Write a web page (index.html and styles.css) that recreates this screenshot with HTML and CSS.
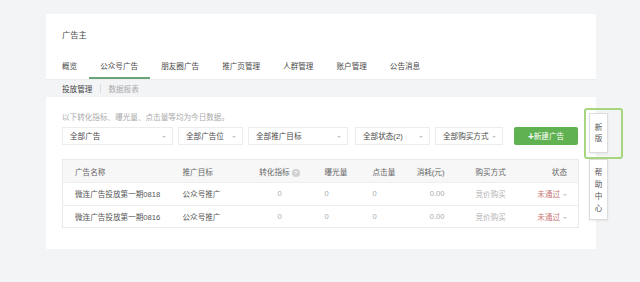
FILE: index.html
```html
<!DOCTYPE html>
<html lang="zh-CN">
<head>
    <meta charset="UTF-8">
    <meta name="viewport" content="width=device-width, initial-scale=1.0">
    <title>广告主</title>
    <link rel="stylesheet" href="styles.css">
</head>
<body>
    <div class="page">
        <!-- Kepala: judul dan tab -->
        <div class="head-card">
            <div class="title">广告主</div>
            <ul class="tabs">
                <li>概览</li>
                <li class="active">公众号广告</li>
                <li>朋友圈广告</li>
                <li>推广页管理</li>
                <li>人群管理</li>
                <li>账户管理</li>
                <li>公告消息</li>
            </ul>
        </div>

        <div class="subnav">
            <span class="current">投放管理</span>
            <span class="sep"></span>
            <span>数据报表</span>
        </div>

        <!-- Konten utama -->
        <div class="main-card">
            <p class="hint">以下转化指标、曝光量、点击量等均为今日数据。</p>

            <div class="filters">
                <div class="select w1">全部广告<i class="caret"></i></div>
                <div class="select w2">全部广告位<i class="caret"></i></div>
                <div class="select w3">全部推广目标<i class="caret"></i></div>
                <div class="select w4">全部状态(2)<i class="caret"></i></div>
                <div class="select w5">全部购买方式<i class="caret"></i></div>
                <button class="btn-new"><b>+</b>新建广告</button>
            </div>

            <table class="table">
                <colgroup>
                    <col style="width:108px">
                    <col style="width:74px">
                    <col style="width:70px">
                    <col style="width:48px">
                    <col style="width:43px">
                    <col style="width:50px">
                    <col style="width:65px">
                    <col style="width:58px">
                </colgroup>
                <thead>
                    <tr>
                        <th>广告名称</th>
                        <th>推广目标</th>
                        <th class="c">转化指标 <span class="q">?</span></th>
                        <th>曝光量</th>
                        <th>点击量</th>
                        <th class="r">消耗(元)</th>
                        <th class="buy">购买方式</th>
                        <th class="r">状态</th>
                    </tr>
                </thead>
                <tbody id="adRows">
                    <!-- Baris diisi lewat skrip -->
                </tbody>
            </table>
        </div>
    </div>

    <!-- Panel samping -->
    <div class="side">
        <div class="side-new"><div class="side-box">新<br>版</div></div>
        <div class="side-box help">帮<br>助<br>中<br>心</div>
    </div>

    <script>
        const adData = [
            { nama: '微连广告投放第一期0818', target: '公众号推广' },
            { nama: '微连广告投放第一期0816', target: '公众号推广' }
        ];

        const tbody = document.getElementById('adRows');
        adData.forEach(ad => {
            const row = document.createElement('tr');
            row.innerHTML = `
                <td>${ad.nama}</td>
                <td>${ad.target}</td>
                <td class="c num">0</td>
                <td class="num">0</td>
                <td class="num">0</td>
                <td class="r num">0.00</td>
                <td class="buy muted">竞价购买</td>
                <td class="r"><span class="fail">未通过</span><i class="caret small"></i></td>
            `;
            tbody.appendChild(row);
        });
    </script>
</body>
</html>
```

FILE: styles.css
```css
/* Dasar */
body {
    margin: 0;
    background-color: #f3f4f6;
    font-family: "Liberation Sans", "Noto Sans CJK SC", sans-serif;
    font-size: 7.6px;
    color: #4a4a4a;
}
.page {
    width: 550px;
    margin-left: 46px;
    padding-top: 14px;
}
/* Kartu judul */
.head-card {
    background-color: #fff;
    padding: 16px 16px 0;
    box-shadow: 0 1px 1px rgba(0, 0, 0, 0.03);
}
.title {
    font-size: 8.3px;
    line-height: 10px;
    margin-bottom: 17px;
}
.tabs {
    display: flex;
    list-style: none;
    margin: 0 0 0 -11.5px;
    padding: 0;
}
.tabs li {
    padding: 0 11.5px;
    line-height: 20px;
    border-bottom: 2px solid transparent;
}
.tabs li.active {
    border-bottom-color: #6aa57a;
}
/* Sub navigasi */
.subnav {
    display: flex;
    align-items: center;
    height: 18px;
    padding-left: 16px;
    color: #aaa;
}
.subnav .current {
    color: #444;
}
.subnav .sep {
    width: 1px;
    height: 9px;
    background-color: #ddd;
    margin: 0 7px 0 8px;
}
/* Kartu utama */
.main-card {
    background-color: #fff;
    padding: 16px 18px 21px 16px;
}
.hint {
    margin: 0;
    line-height: 10px;
    color: #aaa;
}
.filters {
    display: flex;
    margin-top: 4px;
}
.select {
    position: relative;
    height: 18px;
    line-height: 18px;
    box-sizing: border-box;
    border: 1px solid #ececec;
    padding-left: 7px;
    margin-right: 5px;
}
.w1 { width: 111px; }
.w2 { width: 65px; }
.w3 { width: 100px; }
.w4 { width: 75px; margin-left: 2px; }
.w5 { width: 68px; }
.caret {
    position: absolute;
    right: 6px;
    top: 8px;
    border-left: 2px solid transparent;
    border-right: 2px solid transparent;
    border-top: 2px solid #c8c8c8;
}
.caret.small {
    position: static;
    display: inline-block;
    margin-left: 3px;
    vertical-align: middle;
}
.btn-new {
    margin-left: auto;
    width: 64px;
    height: 18px;
    border: none;
    border-radius: 2px;
    background-color: #5fb151;
    color: #fff;
    font-family: inherit;
    font-size: 7.6px;
    padding: 0;
    cursor: pointer;
}
.btn-new b {
    font-size: 10px;
    line-height: 10px;
    vertical-align: -1px;
}
/* Tabel */
.table {
    width: 516px;
    margin-top: 14px;
    border-collapse: collapse;
    table-layout: fixed;
    border: 1px solid #eaeaea;
}
.table th, .table td {
    text-align: left;
    padding: 0 0 0 12px;
    white-space: nowrap;
    font-weight: normal;
}
.table th {
    height: 22px;
    background-color: #f7f7f7;
    color: #666;
}
.table td {
    height: 21.5px;
    border-top: 1px solid #eeeeee;
    color: #555;
}
.table th:nth-child(4), .table td:nth-child(4),
.table th:nth-child(5), .table td:nth-child(5) {
    padding-left: 10px;
}
.table .c {
    text-align: center;
    padding-left: 0;
}
.table .r {
    text-align: right;
    padding: 0 11px 0 0;
}
.table .buy {
    padding-left: 20px;
}
.table .num {
    color: #aaa;
}
.table .muted {
    color: #b5b5b5;
}
.fail {
    color: #c9787a;
}
.q {
    display: inline-block;
    width: 8px;
    height: 8px;
    line-height: 8px;
    border-radius: 50%;
    background-color: #d0d0d0;
    color: #fff;
    font-size: 6px;
    text-align: center;
    vertical-align: middle;
}
/* Panel samping */
.side {
    position: absolute;
    left: 584px;
    top: 108px;
    width: 39px;
}
.side-new {
    height: 51px;
    box-sizing: border-box;
    border: 2px solid #a6d77f;
    border-radius: 3px;
    padding: 3px 0 0 3px;
}
.side-box {
    width: 19px;
    box-sizing: border-box;
    background-color: #fff;
    border: 1px solid #dcdcdc;
    box-shadow: 0 1px 2px rgba(0, 0, 0, 0.08);
    text-align: center;
    color: #555;
    line-height: 11px;
    padding-top: 8px;
    height: 40px;
}
.side-box.help {
    margin-left: 5px;
    height: 61px;
    padding-top: 7px;
    line-height: 12px;
}
```
